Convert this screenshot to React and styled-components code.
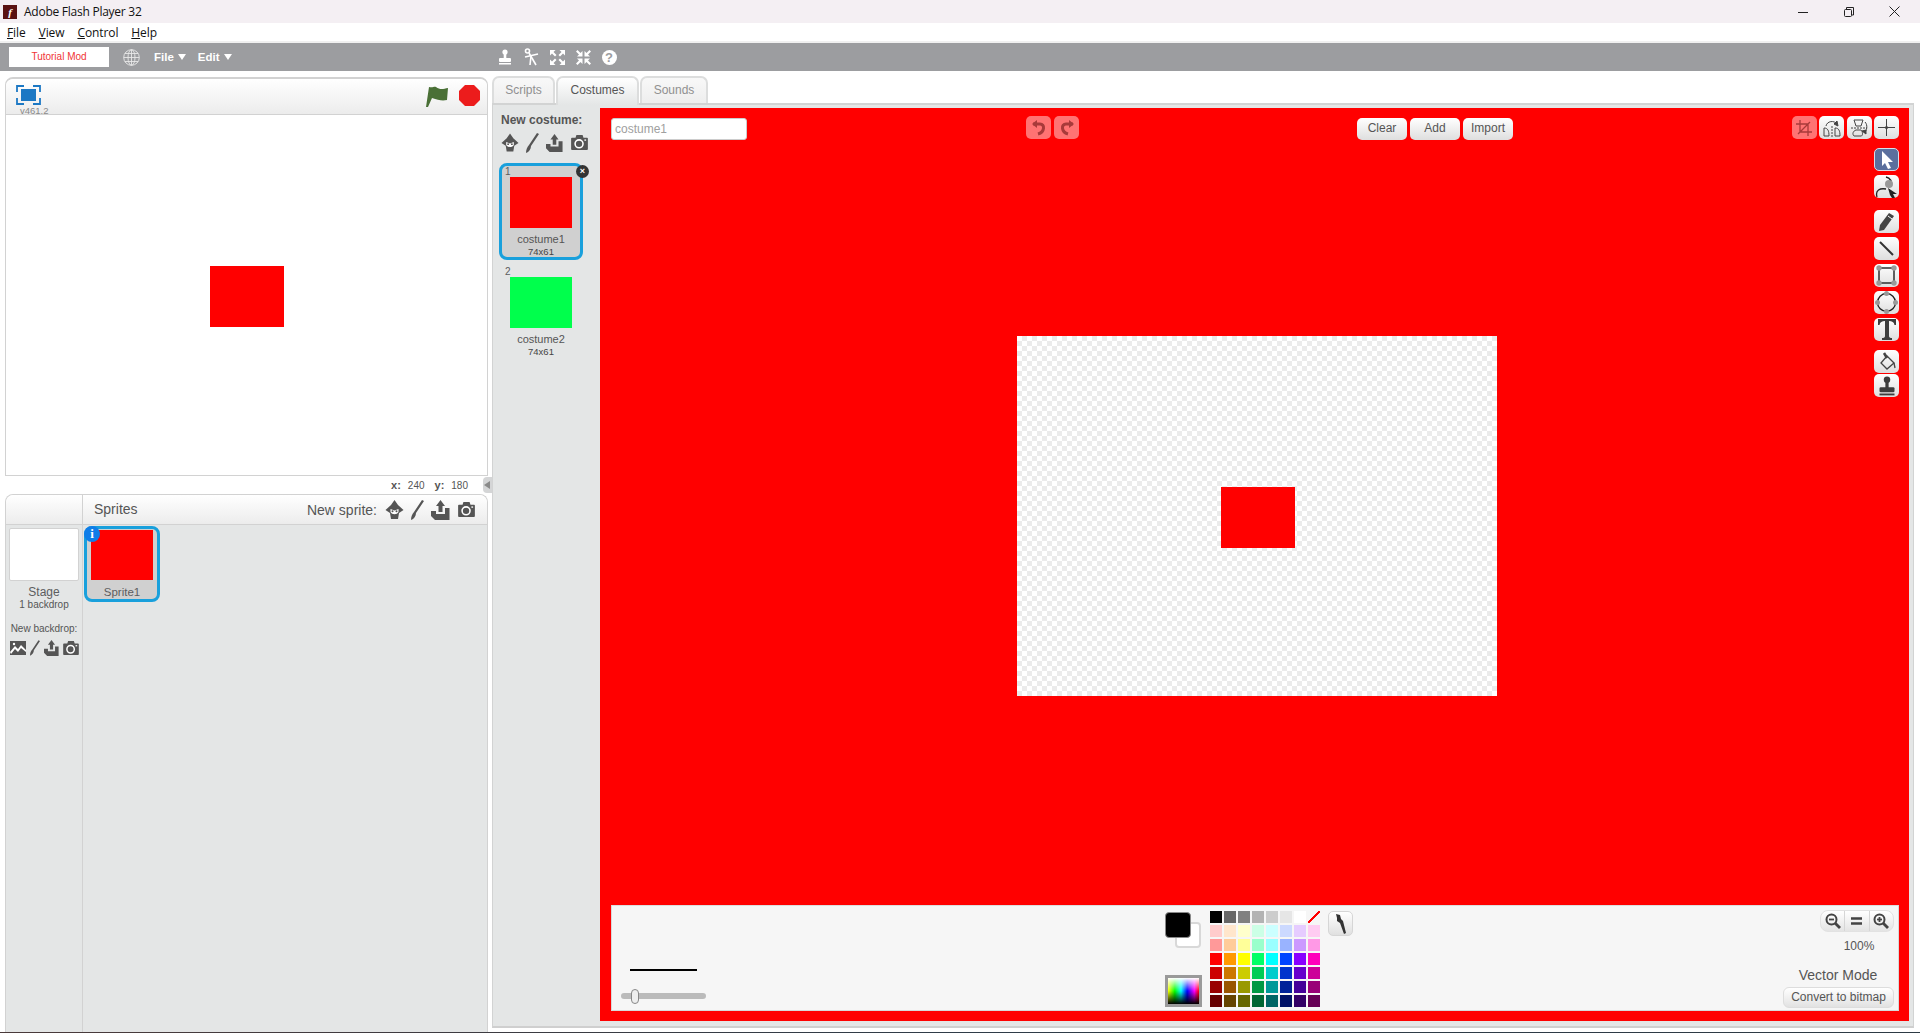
import React from "react";
import styled, { createGlobalStyle } from "styled-components";

const Global = createGlobalStyle`
  html, body { margin: 0; padding: 0; background: #fff; overflow: hidden; }
  * { box-sizing: border-box; }
  body { font-family: "Liberation Sans", Arial, sans-serif; color: #5c5d5f; }
`;

const Page = styled.div`
  width: 1920px; height: 1033px; display: flex; flex-direction: column; overflow: hidden; background: #fff;
`;
const TitleBar = styled.div`
  height: 23px; flex: none; background: #f4eff3; display: flex; align-items: center; padding: 0 3px 0 3px;
  font: 12px "Open Sans", sans-serif; color: #111;
`;
const AppGlyph = styled.span`
  width: 14px; height: 14px; background: #5a1212; color: #fff; font: italic bold 11px/14px "Liberation Serif", serif;
  text-align: center; margin-right: 7px;
`;
const TitleText = styled.span` flex: 1; letter-spacing: -0.25px; `;
const WindowBtn = styled.div`
  width: 45.500px; height: 23px; display: flex; align-items: center; justify-content: center;
`;
const MenuBar = styled.div`
  height: 20px; flex: none; background: #fff; border-bottom: 2px solid #f0f0f0; display: flex; gap: 13px; padding-left: 7px;
  align-items: center; font: 12px "Open Sans", sans-serif; color: #111; letter-spacing: -0.1px;
`;
const ToolBar = styled.div`
  height: 28px; flex: none; background: #9c9da0; display: flex; align-items: center; padding-left: 9px; color: #fff;
`;
const ModBox = styled.div`
  width: 100px; height: 20px; background: #fff; color: #f03535; font-size: 10px; text-align: center; line-height: 20px; margin-right: 14px;
`;
const TopMenu = styled.div`
  display: flex; align-items: center; gap: 4px; font-size: 11.500px; font-weight: bold; margin-left: ${p => p.$ml}px;
`;
const Caret = styled.span`
  width: 0; height: 0; border-left: 4px solid transparent; border-right: 4px solid transparent; border-top: 6px solid #fff;
`;
const TopIcons = styled.div` display: flex; align-items: center; gap: 11px; margin-left: 265px; `;
const HelpDot = styled.span`
  width: 15px; height: 15px; border-radius: 50%; background: #fff; color: #9c9da0; font: bold 13px/15px "Liberation Sans", sans-serif; text-align: center;
`;
const Main = styled.div` flex: 1; display: flex; min-height: 0; `;
const LeftCol = styled.div`
  width: 492px; flex: none; padding: 6px 4px 0 5px; display: flex; flex-direction: column;
`;
const StagePanel = styled.div`
  height: 399px; flex: none; display: flex; flex-direction: column; border: 1px solid #d2d2d2; border-radius: 8px 8px 0 0; border-top-width: 2px;
`;
const StageHeader = styled.div`
  height: 36px; flex: none; background: linear-gradient(#fff, #ececec); border-radius: 8px 8px 0 0; border-bottom: 1px solid #d2d2d2;
  display: flex; align-items: flex-start; padding: 6px 7px 0 10px; overflow: hidden;
`;
const FullCol = styled.div` display: flex; flex-direction: column; flex: 1; align-items: flex-start; `;
const Version = styled.span` font-size: 9.500px; line-height: 11px; color: #8a8a8a; margin: 0 0 0 4px; `;
const Stage = styled.div` flex: 1; background: #fff; `;
const StageSprite = styled.div` width: 74px; height: 61px; background: #f00; margin: 151px 0 0 204px; `;
const Coords = styled.div`
  height: 18px; flex: none; display: flex; align-items: center; justify-content: flex-end; gap: 10px; font-size: 10px; color: #555; position: relative; padding-right: 20px;
  b { margin-right: 7px; font-size: 11px; }
`;
const Collapse = styled.div`
  position: absolute; right: -4px; top: 1px; width: 9px; height: 16px; background: #d4d5d6; border-radius: 4px 0 0 4px;
  &::after { content: ""; position: absolute; left: 1px; top: 4px; border-right: 6px solid #8a8a8a; border-top: 4px solid transparent; border-bottom: 4px solid transparent; }
`;
const SpritesPanel = styled.div`
  flex: 1; display: flex; flex-direction: column; border: 1px solid #d2d2d2; border-bottom: none; border-radius: 8px 8px 0 0;
`;
const SpritesHeader = styled.div`
  height: 30px; flex: none; display: flex; background: linear-gradient(#fff, #ececec); border-bottom: 1px solid #d2d2d2; border-radius: 8px 8px 0 0;
`;
const HeaderStub = styled.div` width: 77px; flex: none; border-right: 1px solid #d2d2d2; `;
const SpritesTitle = styled.div` flex: 1; padding-left: 11px; font-size: 14px; line-height: 29px; color: #555; `;
const NewSprite = styled.div` display: flex; align-items: center; gap: 6px; font-size: 14px; padding-right: 11px; color: #555; `;
const IconRow = styled.div` display: flex; align-items: center; gap: ${p => p.$gap || 6}px; margin-left: ${p => p.$ml || 0}px; `;
const SpritesBody = styled.div` flex: 1; display: flex; background: #e4e6e6; `;
const StageCol = styled.div`
  width: 77px; flex: none; border-right: 1px solid #d2d2d2; display: flex; flex-direction: column; align-items: center; padding-top: 3px;
`;
const StageThumb = styled.div` width: 70px; height: 53px; background: #fff; border: 1px solid #d2d2d2; border-radius: 2px; `;
const StageName = styled.div` font-size: 12px; line-height: 14px; margin-top: 4px; `;
const SmallText = styled.div` font-size: 10px; line-height: 12px; margin-top: ${p => p.$mt || 0}px; color: #555; `;
const SpriteArea = styled.div` flex: 1; padding: 1px 0 0 1px; `;
const SpriteTile = styled.div`
  position: relative; width: 76px; height: 76px; background: #d0d0d0; border: 3px solid #19a0dc; border-radius: 8px;
  display: flex; flex-direction: column; align-items: center; padding-top: 1px;
`;
const SpriteThumb = styled.div` width: 62px; height: 51px; background: #f00; margin-left: -1px; `;
const SpriteName = styled.div` font-size: 11.500px; line-height: 14px; margin-top: 5px; `;
const InfoBadge = styled.div`
  position: absolute; left: -3px; top: -3px; width: 16px; height: 16px; border-radius: 50%; background: #0f7de8; color: #fff;
  font: bold 13px/16px "Liberation Serif", serif; text-align: center;
`;
const RightCol = styled.div` width: 1422px; flex: none; padding-top: 5px; display: flex; flex-direction: column; height: 100%; `;
const Tabs = styled.div` height: 27px; flex: none; display: flex; gap: 1px; `;
const Tab = styled.div`
  width: ${p => p.$w}px; height: ${p => p.$active ? 29 : 27}px; position: relative; z-index: 1; border: 2px solid #dcdddd; border-bottom: none; border-radius: 7px 7px 0 0;
  font-size: 12px; line-height: 24px; text-align: center; color: ${p => p.$active ? "#555" : "#909090"};
  background: ${p => p.$active ? "linear-gradient(#fff,#e4e6e6)" : "linear-gradient(#f8f8f8,#eee)"};
`;
const TabBody = styled.div`
  height: 925px; flex: none; display: flex; background: #e4e6e6; border-top: 2px solid #d2d3d3; border-bottom: 2px solid #cfcfcf; border-left: 1px solid #d2d3d3; border-right: 1px solid #d2d3d3;
`;
const CostumeCol = styled.div` width: 107px; flex: none; padding: 8px 0 0 6px; display: flex; flex-direction: column; `;
const NewCostume = styled.div` font-size: 12px; line-height: 14px; font-weight: bold; padding-left: 2px; color: #555; `;
const CostumeIcons = styled(IconRow)` margin: 6px 0 11px 2px; gap: 7px; height: 19px; `;
const CostumeTile = styled.div`
  position: relative; width: 84px; height: 97px; margin-bottom: 3px; border: 3px solid ${p => p.$sel ? "#19a0dc" : "transparent"}; border-radius: 8px;
  background: ${p => p.$sel ? "#d0d0d0" : "transparent"}; display: flex; flex-direction: column; align-items: center;
`;
const TileNum = styled.div` align-self: flex-start; font-size: 10px; line-height: 11px; padding-left: 3px; height: 11px; `;
const CostumeThumb = styled.div` width: 62px; height: 51px; background: ${p => p.$c}; `;
const CostumeName = styled.div` font-size: 11px; line-height: 13px; margin-top: 5px; color: #555; `;
const CostumeSize = styled.div` font-size: 9.500px; line-height: 11px; margin-top: 0; color: #444; `;
const DeleteBadge = styled.div`
  position: absolute; right: -9px; top: -1px; width: 13px; height: 13px; border-radius: 50%; background: #333; color: #fff; font: bold 9px/13px "Liberation Sans", sans-serif; text-align: center;
`;
const PaintArea = styled.div`
  width: 1309px; height: 913px; margin-top: 3px; flex: none; background: #f00; display: flex; flex-direction: column;
`;
const PaintTop = styled.div` height: 40px; flex: none; display: flex; align-items: flex-start; padding: 8px 10px 0 11px; `;
const NameInput = styled.div`
  width: 136px; height: 22px; margin-top: 2px; background: #fff; border: 1px solid #ccc; border-radius: 3px; font-size: 12px; line-height: 20px; padding-left: 3px; color: #a0a0a0;
`;
const Undo = styled.div` display: flex; gap: 3px; margin-left: 279px; `;
const UndoBtn = styled.div`
  width: 25px; height: 23px; background: rgba(255,255,255,.45); border-radius: 5px; display: flex; align-items: center; justify-content: center;
`;
const Actions = styled.div` display: flex; gap: 3px; margin: 2px 0 0 278px; `;
const Btn = styled.div`
  width: 50px; height: 22px; background: linear-gradient(#fff, #dedede); border-radius: 5px; font-size: 12px; line-height: 21px; text-align: center; color: #555;
`;
const Transforms = styled.div` display: flex; gap: 2.500px; margin-left: auto; `;
const ToolBtn = styled.div`
  width: 25px; height: 23px; flex: none; border-radius: 5px; display: flex; align-items: center; justify-content: center;
  background: ${p => p.$dim ? "rgba(255,255,255,.45)" : p.$on ? "#5b6f9d" : "linear-gradient(#fff, #dedede)"};
  border: ${p => p.$on ? "1px solid #d8dde8" : "none"};
  margin-top: ${p => p.$mt || 0}px;
`;
const Middle = styled.div` flex: 1; display: flex; padding: 0 10px 0 417px; min-height: 0; `;
const Canvas = styled.div`
  width: 480px; height: 360px; margin-top: 188px; display: flex; padding: 151px 0 0 204px;
  background: repeating-conic-gradient(#ebebeb 0 25%, #fff 0 50%) 0 0 / 10px 10px;
`;
const CanvasShape = styled.div` width: 74px; height: 61px; background: #f00; `;
const ToolCol = styled.div` margin-left: auto; display: flex; flex-direction: column; gap: 4px; `;
const Bottom = styled.div`
  height: 106px; flex: none; margin: 0 10px 10px 11px; background: #f6f6f6; border: 1px solid #d8d8d8; border-top-color: #ddd; display: flex; position: relative;
`;
const LineCol = styled.div` width: 553px; flex: none; display: flex; flex-direction: column; padding: 63px 0 0 9px; `;
const LinePreview = styled.div` width: 67px; height: 2px; background: #000; margin-left: 9px; `;
const SliderTrack = styled.div` width: 85px; height: 6px; border-radius: 3px; background: #bbb; margin-top: 22px; position: relative; `;
const SliderKnob = styled.div`
  position: absolute; left: 10px; top: -4px; width: 8px; height: 15px; background: #eee; border: 1px solid #888; border-radius: 4px;
`;
const SwatchCol = styled.div` width: 45px; flex: none; padding-top: 6px; display: flex; flex-direction: column; `;
const SwatchStack = styled.div` position: relative; width: 37px; height: 37px; `;
const Primary = styled.div`
  position: absolute; left: 0; top: 0; width: 26px; height: 26px; background: #000; border: 1px solid #888; border-radius: 4px; z-index: 1;
`;
const Secondary = styled.div`
  position: absolute; left: 10px; top: 10px; width: 26px; height: 26px; background: #fff; border: 2px solid #d8d8d8; border-radius: 4px;
`;
const Spectrum = styled.div`
  width: 37px; height: 32px; margin-top: 26px; border: 3px solid #9a9a9a;
  background: linear-gradient(#fff 0%, transparent 50%, #000 100%), linear-gradient(90deg, #ffff00 0%, #00ff00 22%, #00ffff 42%, #0000ff 62%, #ff00ff 85%, #ff0000 100%);
`;
const ColorGrid = styled.div` display: grid; grid-template-columns: repeat(8, 12px); grid-auto-rows: 12px; gap: 2px; padding-top: 5px; height: fit-content; `;
const ColorCell = styled.div` background: ${p => p.$c}; `;
const NoneCell = styled.div`
  background: linear-gradient(to top left, transparent 44%, #f00 44%, #f00 56%, transparent 56%);
`;
const Eyedrop = styled.div`
  width: 25px; height: 25px; margin: 5px 0 0 8px; border-radius: 5px; background: linear-gradient(#fff, #e0e0e0); border: 1px solid #d6d6d6; display: flex; align-items: center; justify-content: center;
`;
const RightTools = styled.div`
  margin-left: auto; width: 112px; flex: none; margin-right: 4px; display: flex; flex-direction: column; align-items: flex-end; padding-top: 4px;
`;
const ZoomGroup = styled.div`
  width: 74px; height: 22px; display: flex; border-radius: 8px; background: linear-gradient(#fff, #e4e4e4); border: 1px solid #e2e2e2;
`;
const ZoomBtn = styled.div`
  flex: 1; display: flex; align-items: center; justify-content: center; border-left: ${p => p.$div ? "1px solid #d6d6d6" : "none"};
`;
const Percent = styled.div` font-size: 12px; line-height: 14px; width: 74px; text-align: center; margin: 7px -2px 0 0; color: #555; `;
const ModeLabel = styled.div` font-size: 14px; line-height: 16px; width: 112px; text-align: center; margin-top: 14px; color: #555; `;
const ConvertBtn = styled.div`
  width: 111px; height: 21px; margin-top: 4px; background: linear-gradient(#fff, #e2e2e2); border: 1px solid #ddd; border-radius: 6px; font-size: 12px; line-height: 19px; text-align: center; color: #555;
`;
const TaskEdge = styled.div` height: 1px; flex: none; background: linear-gradient(90deg, #4a3a3a, #2f3c48 50%, #2d3a44); `;

const G = "#555";
const SpriteLibIcon = ({ w = 19, h = 20 }) => (
  <svg width={w} height={h} viewBox="0 0 19 20">
    <path d="M9.500 0 L13 5 L18.500 10 L14 13 L13 19 H6 L5 13 L.5 10 L6 5Z" fill={G} />
    <path d="M5.500 9 L9.500 10.500 L13.500 9 L13.500 12 C12 15 7 15 5.500 12Z" fill="#fff" />
    <circle cx="7.500" cy="11.200" r="1" fill={G} /><circle cx="11.500" cy="11.200" r="1" fill={G} />
  </svg>
);
const BrushIcon = ({ w = 13, h = 20 }) => (
  <svg width={w} height={h} viewBox="0 0 13 20">
    <path d="M11 0 L13 1 L5 13 C5 16 3 19 0 20 C0 17 1 14 3 12Z" fill={G} />
  </svg>
);
const UploadIcon = ({ w = 19, h = 20 }) => (
  <svg width={w} height={h} viewBox="0 0 19 20">
    <path d="M0 11 H5 V14 H14 V8 H18.500 V20 H4 L0 16Z" fill={G} />
    <path d="M9.500 0 L14 6 H11.500 V12 H7.500 V6 H5Z" fill={G} />
  </svg>
);
const CameraIcon = ({ w = 19, h = 15 }) => (
  <svg width={w} height={h} viewBox="0 0 19 17">
    <path d="M1 3 H5 L6 0 H13 L14 3 H18 A1 1 0 0 1 19 4 V16 A1 1 0 0 1 18 17 H1 A1 1 0 0 1 0 16 V4 A1 1 0 0 1 1 3Z" fill={G} />
    <circle cx="9" cy="10" r="4.500" fill="none" stroke="#fff" strokeWidth="1.800" />
    <rect x="15" y="5" width="2" height="1.500" fill="#fff" />
  </svg>
);
const LandscapeIcon = () => (
  <svg width="16" height="14" viewBox="0 0 16 14">
    <rect width="16" height="14" fill={G} />
    <path d="M0 11 L5 5 L8 8 L11 4 L16 9 V11 L11 7 L8 11 L5 8 L1 13Z" fill="#fff" />
    <circle cx="4" cy="3" r="1.200" fill="#fff" />
  </svg>
);
const StampIcon = ({ c = "#fff", s = 16 }) => (
  <svg width={s} height={s} viewBox="0 0 16 16">
    <circle cx="8" cy="3" r="2.600" fill={c} />
    <rect x="6.700" y="4" width="2.600" height="6" fill={c} />
    <rect x="2" y="9" width="12" height="4" rx="1" fill={c} />
    <rect x="2" y="14" width="12" height="1.500" fill={c} />
  </svg>
);
const ScissorsIcon = () => (
  <svg width="15" height="18" viewBox="0 0 15 18" fill="none" stroke="#fff" strokeWidth="1.600">
    <path d="M5 5 L12 17" /><path d="M1 9 L14 6" /><circle cx="3.500" cy="3" r="2" />
    <path d="M7 8 L6 17" />
  </svg>
);
const GrowIcon = ({ flip }) => (
  <svg width="15" height="15" viewBox="0 0 15 15" fill="#fff">
    {flip ? (
      <>
        <path d="M6.500 6.500 H1 L3 4.500 L0 1.500 L1.500 0 L4.500 3 L6.500 1Z" />
        <path d="M8.500 6.500 H14 L12 4.500 L15 1.500 L13.500 0 L10.500 3 L8.500 1Z" />
        <path d="M6.500 8.500 H1 L3 10.500 L0 13.500 L1.500 15 L4.500 12 L6.500 14Z" />
        <path d="M8.500 8.500 H14 L12 10.500 L15 13.500 L13.500 15 L10.500 12 L8.500 14Z" />
      </>
    ) : (
      <>
        <path d="M0 0 H5.500 L3.500 2 L6.500 5 L5 6.500 L2 3.500 L0 5.500Z" />
        <path d="M15 0 H9.500 L11.500 2 L8.500 5 L10 6.500 L13 3.500 L15 5.500Z" />
        <path d="M0 15 H5.500 L3.500 13 L6.500 10 L5 8.500 L2 11.500 L0 9.500Z" />
        <path d="M15 15 H9.500 L11.500 13 L8.500 10 L10 8.500 L13 11.500 L15 9.500Z" />
      </>
    )}
  </svg>
);

const colors = [
  ["#000", "#666", "#808080", "#b3b3b3", "#ccc", "#e6e6e6", "#fff", null],
  ["#ffcccc", "#ffe6cc", "#ffffcc", "#ccffe6", "#ccffff", "#ccd9ff", "#e6ccff", "#ffccf2"],
  ["#ff9999", "#ffcc99", "#ffff99", "#99ffcc", "#99ffff", "#99b3ff", "#cc99ff", "#ff99e6"],
  ["#ff0000", "#ff9900", "#ffff00", "#00ff66", "#00ffff", "#0044ff", "#8800ff", "#ff00bb"],
  ["#cc0000", "#cc7700", "#cccc00", "#00cc55", "#00cccc", "#0033cc", "#6600cc", "#cc0099"],
  ["#990000", "#995500", "#999900", "#009944", "#009999", "#002299", "#440099", "#990077"],
  ["#660000", "#664400", "#666600", "#006633", "#006666", "#001166", "#330066", "#660055"],
].flat();

const Mag = ({ minus }) => (
  <svg width="16" height="16" viewBox="0 0 16 16" fill="none" stroke="#444">
    <circle cx="6.500" cy="6.500" r="5" strokeWidth="2" />
    <path d="M10 10 L15 15" strokeWidth="2.800" />
    <path d="M4 6.500 H9" strokeWidth="1.800" />
    {!minus && <path d="M6.500 4 V9" strokeWidth="1.800" />}
  </svg>
);

export default function App() {
  return (
    <Page>
      <Global />
      <TitleBar>
        <AppGlyph>f</AppGlyph>
        <TitleText>Adobe Flash Player 32</TitleText>
        <WindowBtn><svg width="10" height="10"><path d="M0 5.500H10" stroke="#222" /></svg></WindowBtn>
        <WindowBtn><svg width="10" height="10" fill="none" stroke="#222"><rect x=".5" y="2.500" width="7" height="7" rx="1" /><path d="M2.500 2V.5H9.500V8H8" /></svg></WindowBtn>
        <WindowBtn><svg width="11" height="11" stroke="#222"><path d="M.5 .5L10.500 10.500M10.500 .5L.5 10.500" /></svg></WindowBtn>
      </TitleBar>
      <MenuBar>
        <span><u>F</u>ile</span><span><u>V</u>iew</span><span><u>C</u>ontrol</span><span><u>H</u>elp</span>
      </MenuBar>
      <ToolBar>
        <ModBox>Tutorial Mod</ModBox>
        <svg width="17" height="17" viewBox="0 0 17 17" fill="none" stroke="#e8e8e8" strokeWidth=".9">
          <circle cx="8.500" cy="8.500" r="7.800" /><ellipse cx="8.500" cy="8.500" rx="3.500" ry="7.800" />
          <path d="M8.500 .7V16.300M.7 8.500H16.300M1.800 4.500H15.200M1.800 12.500H15.200" />
        </svg>
        <TopMenu $ml={14}>File<Caret /></TopMenu>
        <TopMenu $ml={12}>Edit<Caret /></TopMenu>
        <TopIcons>
          <StampIcon />
          <ScissorsIcon />
          <GrowIcon />
          <GrowIcon flip />
          <HelpDot>?</HelpDot>
        </TopIcons>
      </ToolBar>
      <Main>
        <LeftCol>
          <StagePanel>
            <StageHeader>
              <FullCol>
                <svg width="25" height="20" viewBox="0 0 25 20">
                  <path d="M1 7V1H8M17 1H24V7M1 13V19H8M17 19H24V13" fill="none" stroke="#1c78c4" strokeWidth="1.800" />
                  <rect x="5" y="4" width="15" height="12" fill="#1c78c4" />
                </svg>
                <Version>v461.2</Version>
              </FullCol>
              <svg width="22" height="22" viewBox="0 0 22 22" style={{ marginRight: 11 }}>
                <path d="M3 2 C7 3 8 1 10 2 C14 5 17 4 22 3 L21 15 C16 16 12 15 6 13 L2 22 H0Z" fill="#4a7036" />
              </svg>
              <svg width="21" height="21" viewBox="0 0 21 21">
                <path d="M6 0H15L21 6V15L15 21H6L0 15V6Z" fill="#ec1c1c" />
              </svg>
            </StageHeader>
            <Stage><StageSprite /></Stage>
          </StagePanel>
          <Coords>
            <span><b>x:</b>240</span><span><b>y:</b>180</span>
            <Collapse />
          </Coords>
          <SpritesPanel>
            <SpritesHeader>
              <HeaderStub />
              <SpritesTitle>Sprites</SpritesTitle>
              <NewSprite>New sprite:
                <IconRow $ml={2} $gap={7}>
                  <SpriteLibIcon /><BrushIcon /><UploadIcon /><CameraIcon />
                </IconRow>
              </NewSprite>
            </SpritesHeader>
            <SpritesBody>
              <StageCol>
                <StageThumb />
                <StageName>Stage</StageName>
                <SmallText>1 backdrop</SmallText>
                <SmallText $mt={12}>New backdrop:</SmallText>
                <IconRow $gap={4} style={{ marginTop: 5 }}>
                  <LandscapeIcon /><BrushIcon w={10} h={16} /><UploadIcon w={15} h={16} /><CameraIcon w={16} h={14} />
                </IconRow>
              </StageCol>
              <SpriteArea>
                <SpriteTile>
                  <SpriteThumb />
                  <SpriteName>Sprite1</SpriteName>
                  <InfoBadge>i</InfoBadge>
                </SpriteTile>
              </SpriteArea>
            </SpritesBody>
          </SpritesPanel>
        </LeftCol>
        <RightCol>
          <Tabs>
            <Tab $w={63}>Scripts</Tab>
            <Tab $w={83} $active>Costumes</Tab>
            <Tab $w={68}>Sounds</Tab>
          </Tabs>
          <TabBody>
            <CostumeCol>
              <NewCostume>New costume:</NewCostume>
              <CostumeIcons>
                <SpriteLibIcon w={18} /><BrushIcon /><UploadIcon w={17} /><CameraIcon />
              </CostumeIcons>
              <CostumeTile $sel>
                <TileNum>1</TileNum>
                <CostumeThumb $c="#f00" />
                <CostumeName>costume1</CostumeName>
                <CostumeSize>74x61</CostumeSize>
                <DeleteBadge>×</DeleteBadge>
              </CostumeTile>
              <CostumeTile>
                <TileNum>2</TileNum>
                <CostumeThumb $c="#00ff4c" />
                <CostumeName>costume2</CostumeName>
                <CostumeSize>74x61</CostumeSize>
              </CostumeTile>
            </CostumeCol>
            <PaintArea>
              <PaintTop>
                <NameInput>costume1</NameInput>
                <Undo>
                  <UndoBtn>
                    <svg width="16" height="16" viewBox="0 0 16 16" fill="none" stroke="#a83a3a" strokeWidth="3"><path d="M2 4H9C14 4 14 12 7 14" /><path d="M1 4L6 0V8Z" fill="#a83a3a" strokeWidth="0" /></svg>
                  </UndoBtn>
                  <UndoBtn>
                    <svg width="16" height="16" viewBox="0 0 16 16" fill="none" stroke="#a83a3a" strokeWidth="3"><path d="M14 4H7C2 4 2 12 9 14" /><path d="M15 4L10 0V8Z" fill="#a83a3a" strokeWidth="0" /></svg>
                  </UndoBtn>
                </Undo>
                <Actions>
                  <Btn>Clear</Btn><Btn>Add</Btn><Btn>Import</Btn>
                </Actions>
                <Transforms>
                  <ToolBtn $dim>
                    <svg width="16" height="16" viewBox="0 0 16 16" fill="none" stroke="#a83a3a" strokeWidth="1.300"><path d="M4 0V12H16M0 4H12V16M2 14L14 2" /></svg>
                  </ToolBtn>
                  <ToolBtn>
                    <svg width="18" height="18" viewBox="0 0 18 18" fill="none" stroke="#444"><path d="M1 9C5 9 6 12 6 17H1Z" /><path d="M9 7V18" strokeDasharray="2 1" /><path d="M12 9C16 9 17 12 17 17H12Z" /><path d="M3 7C4 2 11 1 14 5" /><path d="M11 5L15 7L14 2Z" fill="#444" /></svg>
                  </ToolBtn>
                  <ToolBtn>
                    <svg width="18" height="18" viewBox="0 0 18 18" fill="none" stroke="#444"><path d="M4 1H13L11 7H6Z" /><path d="M1 9H17" strokeDasharray="2 1" /><path d="M6 11H11C13 13 13 17 11 17H4C2 15 3 12 6 11Z" /><path d="M15 3C18 6 17 12 14 14" /><path d="M12 12L16 15L16 11Z" fill="#444" /></svg>
                  </ToolBtn>
                  <ToolBtn>
                    <svg width="17" height="17" viewBox="0 0 17 17" stroke="#444"><path d="M8.500 0V17M0 8.500H17" /><circle cx="8.500" cy="8.500" r="1.500" fill="#444" stroke="none" /></svg>
                  </ToolBtn>
                </Transforms>
              </PaintTop>
              <Middle>
                <Canvas><CanvasShape /></Canvas>
                <ToolCol>
                  <ToolBtn $on>
                    <svg width="14" height="18" viewBox="0 0 14 18"><path d="M2 0L13 11H8L11 17L8 18L5 12L2 15Z" fill="#fff" /></svg>
                  </ToolBtn>
                  <ToolBtn>
                    <svg width="23" height="22" viewBox="0 0 23 22" fill="none" stroke="#222" strokeWidth="1.300"><path d="M2 21C0 14 5 12 11 13" /><path d="M11 1C15 2 17 5 16 10" /><circle cx="14" cy="8" r="4" fill="#999" stroke="none" /><path d="M13 12L22 18H18L20 22L17 22L15 19Z" fill="#222" stroke="none" /></svg>
                  </ToolBtn>
                  <ToolBtn $mt={8}>
                    <svg width="16" height="18" viewBox="0 0 16 18"><path d="M10 0L15 3L5 17L0 18L1 12Z" fill="#444" /><path d="M9 3L13 6" stroke="#fff" strokeWidth="1" /></svg>
                  </ToolBtn>
                  <ToolBtn>
                    <svg width="15" height="15" viewBox="0 0 15 15"><path d="M1 1L14 14" stroke="#333" strokeWidth="2" /></svg>
                  </ToolBtn>
                  <ToolBtn>
                    <svg width="21" height="21" viewBox="0 0 21 21"><rect x="3" y="3" width="15" height="15" fill="none" stroke="#222" strokeWidth="1.400" /><g fill="#999"><circle cx="3" cy="3" r="2.700" /><circle cx="18" cy="3" r="2.700" /><circle cx="3" cy="18" r="2.700" /><circle cx="18" cy="18" r="2.700" /></g></svg>
                  </ToolBtn>
                  <ToolBtn>
                    <svg width="23" height="23" viewBox="0 0 23 23"><circle cx="11.500" cy="11.500" r="9" fill="none" stroke="#222" strokeWidth="1.400" /><g fill="#999"><circle cx="11.500" cy="2.500" r="2.500" /><circle cx="11.500" cy="20.500" r="2.500" /><circle cx="2.500" cy="11.500" r="2.500" /><circle cx="20.500" cy="11.500" r="2.500" /></g></svg>
                  </ToolBtn>
                  <ToolBtn>
                    <svg width="18" height="21" viewBox="0 0 18 21"><path d="M0 0H18V6H16.500C16 3 14 2 11 2V17C11 18.500 12 19 14 19V21H4V19C6 19 7 18.500 7 17V2C4 2 2 3 1.500 6H0Z" fill="#3d3d3d" /></svg>
                  </ToolBtn>
                  <ToolBtn $mt={5}>
                    <svg width="18" height="19" viewBox="0 0 18 19" fill="none" stroke="#444" strokeWidth="1.300"><path d="M9 4L16 11L9 17L3 11Z" /><path d="M6 1L9 6" strokeWidth="2.500" /><path d="M16 11L17 16" /></svg>
                  </ToolBtn>
                  <ToolBtn style={{ marginTop: -3 }}>
                    <StampIcon c="#3d3d3d" s={20} />
                  </ToolBtn>
                </ToolCol>
              </Middle>
              <Bottom>
                <LineCol>
                  <LinePreview />
                  <SliderTrack><SliderKnob /></SliderTrack>
                </LineCol>
                <SwatchCol>
                  <SwatchStack><Primary /><Secondary /></SwatchStack>
                  <Spectrum />
                </SwatchCol>
                <ColorGrid>
                  {colors.map((c, i) => c ? <ColorCell key={i} $c={c} /> : <NoneCell key={i} />)}
                </ColorGrid>
                <Eyedrop>
                  <svg width="12" height="20" viewBox="0 0 12 20"><path d="M1 0L5 1L6 5L8 7L11 19L9 20L5 9L2 7L2 4Z" fill="#333" /></svg>
                </Eyedrop>
                <RightTools>
                  <ZoomGroup>
                    <ZoomBtn><Mag minus /></ZoomBtn>
                    <ZoomBtn $div>
                      <svg width="11" height="8"><path d="M0 1.500H11M0 6.500H11" stroke="#444" strokeWidth="2.500" /></svg>
                    </ZoomBtn>
                    <ZoomBtn $div><Mag /></ZoomBtn>
                  </ZoomGroup>
                  <Percent>100%</Percent>
                  <ModeLabel>Vector Mode</ModeLabel>
                  <ConvertBtn>Convert to bitmap</ConvertBtn>
                </RightTools>
              </Bottom>
            </PaintArea>
          </TabBody>
        </RightCol>
      </Main>
      <TaskEdge />
    </Page>
  );
}
